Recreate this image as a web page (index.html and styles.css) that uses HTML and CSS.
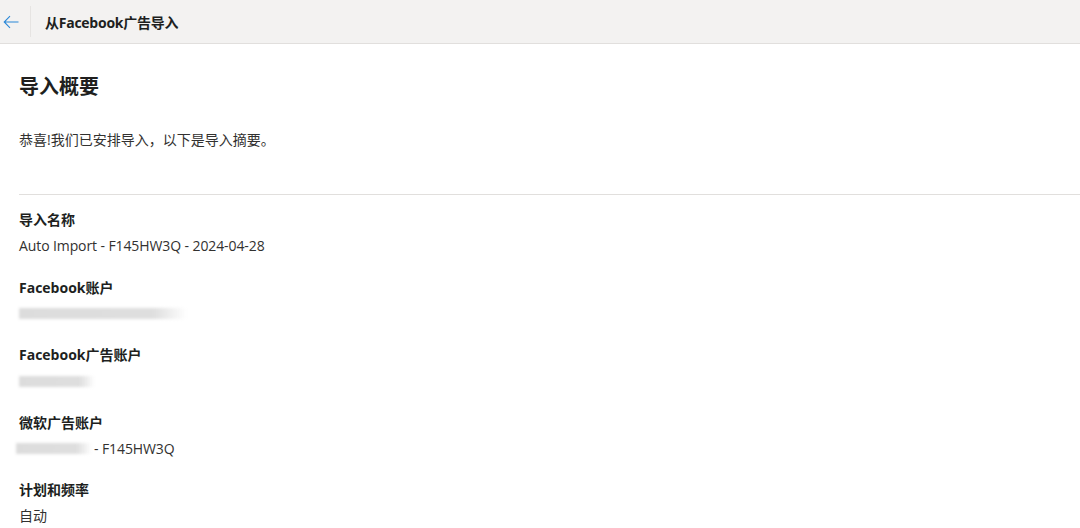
FILE: index.html
```html
<!DOCTYPE html>
<html lang="zh-CN">
<head>
<meta charset="utf-8">
<title>从Facebook广告导入</title>
<link rel="stylesheet" href="styles.css">
</head>
<body>
<header class="topbar">
  <button class="back" aria-label="返回">
    <svg width="16" height="14" viewBox="0 0 16 14"><path d="M15.5 7H1.2M7 1.2L1.2 7 7 12.8" fill="none" stroke="#2b88d8" stroke-width="1.1"/></svg>
  </button>
  <span class="sep"></span>
  <h1 class="title">从Facebook广告导入</h1>
</header>
<main class="content">
  <section class="intro">
    <h2 class="heading">导入概要</h2>
    <p class="lead">恭喜!我们已安排导入，以下是导入摘要。</p>
  </section>
  <section class="fields">
    <div class="field">
      <div class="label">导入名称</div>
      <div class="value">Auto Import - F145HW3Q - 2024-04-28</div>
    </div>
    <div class="field">
      <div class="label">Facebook账户</div>
      <div class="value"><span class="blur blur-long"></span></div>
    </div>
    <div class="field">
      <div class="label">Facebook广告账户</div>
      <div class="value"><span class="blur blur-short"></span></div>
    </div>
    <div class="field">
      <div class="label">微软广告账户</div>
      <div class="value"><span class="blur blur-ms"></span> - F145HW3Q</div>
    </div>
    <div class="field">
      <div class="label">计划和频率</div>
      <div class="value">自动</div>
    </div>
  </section>
</main>
</body>
</html>
```
FILE: styles.css
```css
* { box-sizing: border-box; }
html, body { margin: 0; padding: 0; }
body {
  width: 1080px;
  height: 528px;
  overflow: hidden;
  background: #ffffff;
  font-family: "Open Sans", "Noto Sans CJK SC", sans-serif;
  color: #323130;
  font-size: 14px;
}
.topbar {
  height: 44px;
  background: #f3f2f1;
  border-bottom: 1px solid #e1dfdd;
  display: flex;
  align-items: center;
}
.back {
  width: 22px;
  height: 43px;
  padding: 0 0 0 3px;
  border: 0;
  background: transparent;
  display: flex;
  align-items: center;
}
.sep {
  width: 1px;
  height: 31px;
  background: #e6e4e2;
  margin-left: 8px;
}
.title {
  margin: 0 0 0 14px;
  font-size: 14px;
  font-weight: 700;
  color: #201f1e;
  letter-spacing: -0.25px;
}
.content {
  padding: 0 0 0 19px;
}
.intro {
  border-bottom: 1px solid #e1dfdd;
  padding-top: 29px;
  padding-bottom: 44px;
}
.heading {
  margin: 0;
  font-size: 20px;
  line-height: 28px;
  font-weight: 700;
  color: #201f1e;
}
.lead {
  margin: 29px 0 0;
  font-size: 14px;
  line-height: 20px;
  color: #323130;
}
.fields {
  padding-top: 15px;
  display: flex;
  flex-direction: column;
  gap: 21.5px;
}
.label {
  font-weight: 700;
  line-height: 20px;
  height: 20px;
  color: #201f1e;
  font-size: 14px;
}
.value {
  margin-top: 6px;
  line-height: 20px;
  height: 20px;
  color: #323130;
  display: flex;
  align-items: center;
  letter-spacing: -0.1px;
}
.blur {
  display: inline-block;
  height: 11px;
  background: linear-gradient(90deg, #dcdcdc 0%, #dedede 80%, rgba(230,230,230,0) 100%);
  filter: blur(1.5px);
}
.blur-long { width: 168px; }
.blur-short { width: 76px; }
.blur-ms { width: 76px; margin-left: -3px; margin-right: 2px; }
```
